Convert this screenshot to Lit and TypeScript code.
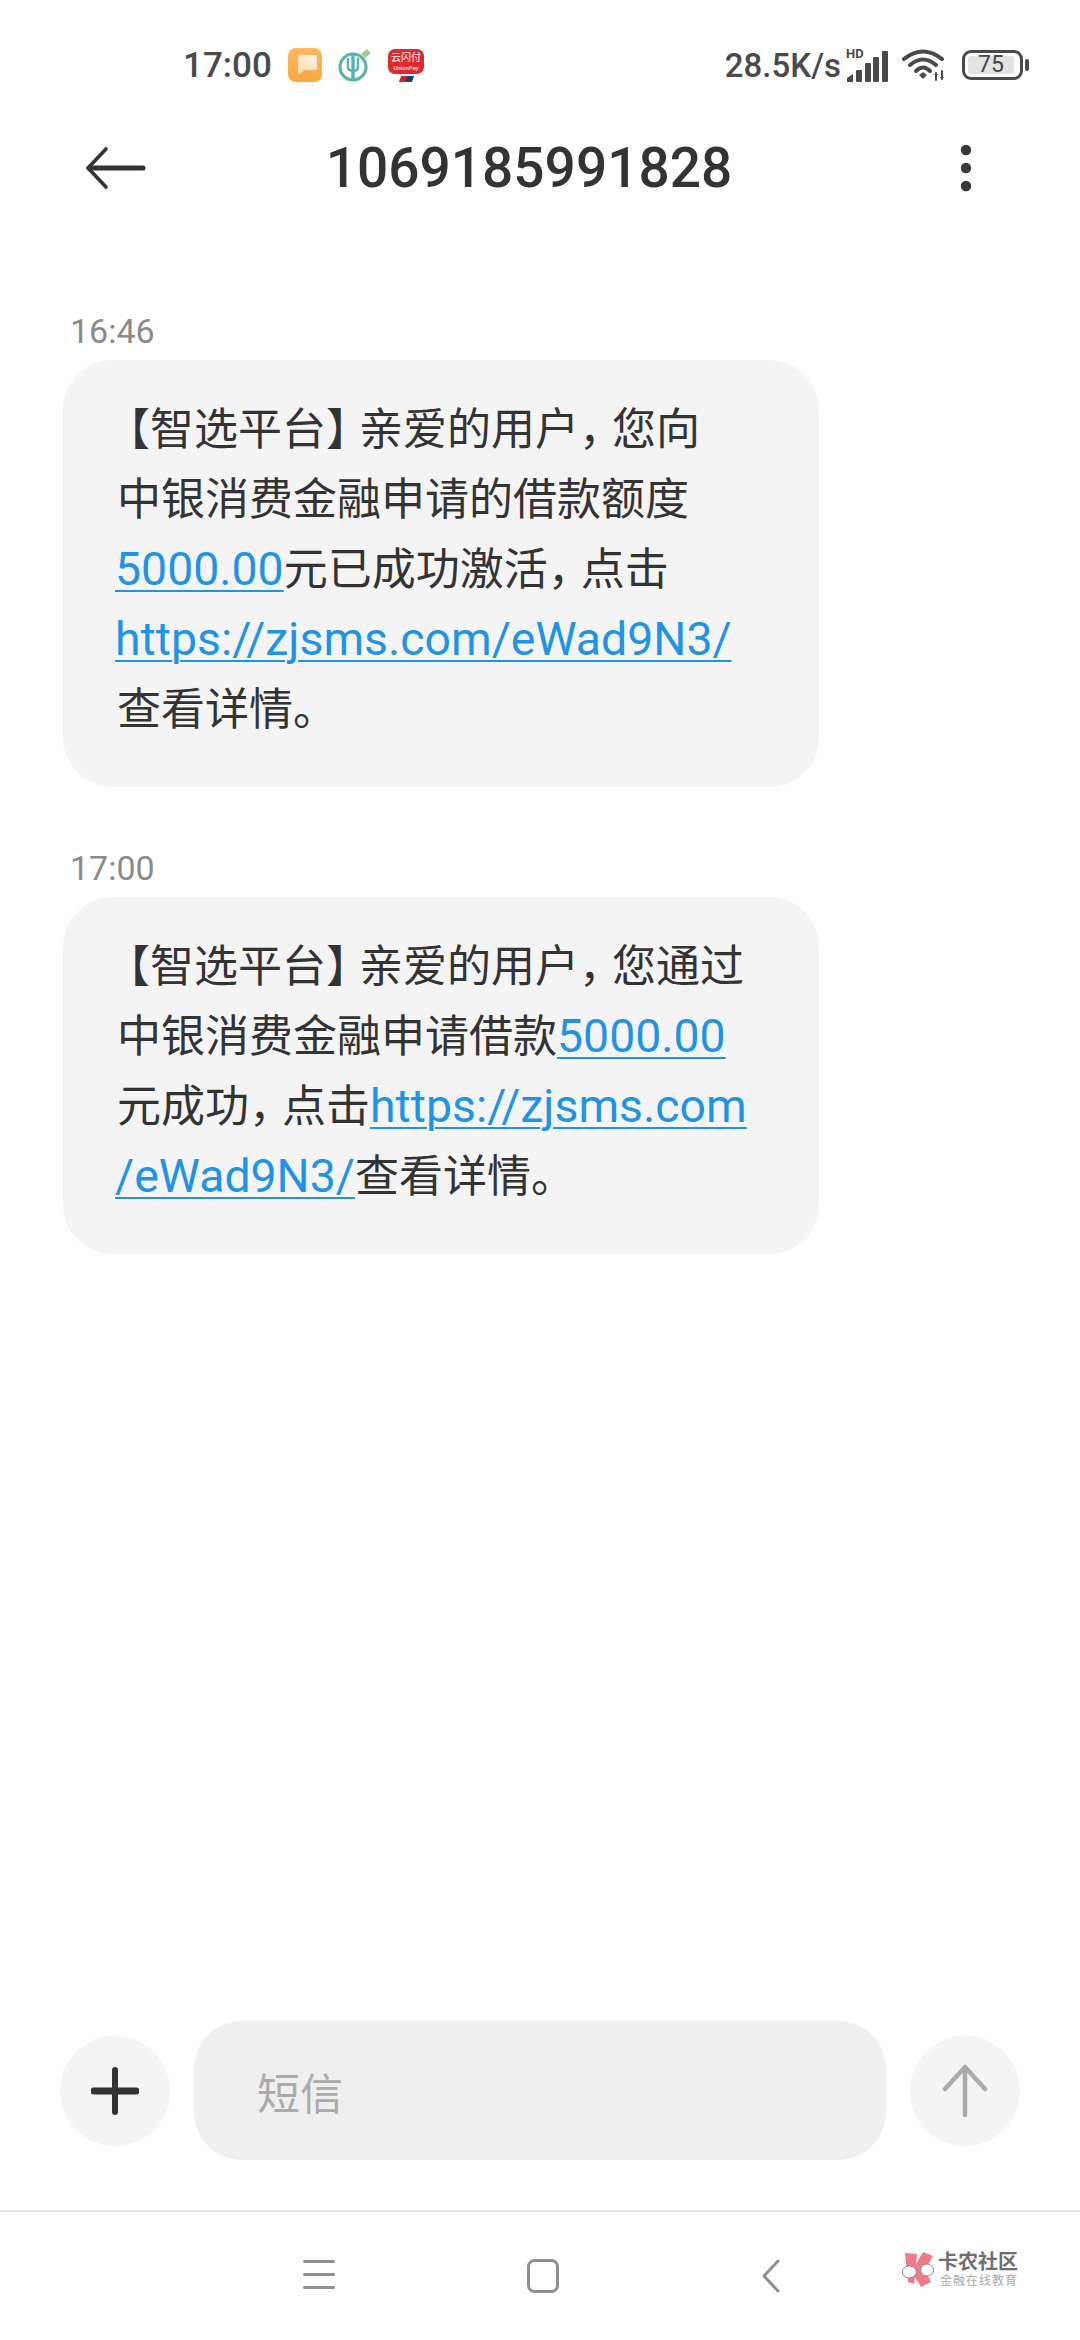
import { LitElement, html, css, svg } from 'lit';
import { customElement } from 'lit/decorators.js';

const backIcon = html`<svg width="62" height="44" viewBox="0 0 62 44" fill="none" stroke="#333" stroke-linecap="round" stroke-linejoin="round">
  <path d="M21 3 L3 22 L21 41" stroke-width="3.6"/><path d="M4 22 H58" stroke-width="5"/>
</svg>`;

const moreIcon = html`<svg width="14" height="48" viewBox="0 0 14 48" fill="#383838">
  <circle cx="7" cy="6" r="5.2"/><circle cx="7" cy="24" r="5.2"/><circle cx="7" cy="42" r="5.2"/>
</svg>`;

const msgIcon = svg`<svg width="34" height="34" viewBox="0 0 34 34">
  <defs>
    <linearGradient id="o" x1="0" y1="0" x2="0" y2="1"><stop offset="0" stop-color="#fdb95c"/><stop offset="1" stop-color="#fba63f"/></linearGradient>
    <linearGradient id="w" x1="1" y1="0" x2="0" y2="1"><stop offset="0" stop-color="#fff4e4"/><stop offset="1" stop-color="#fdd9a6"/></linearGradient>
  </defs>
  <rect width="34" height="34" rx="8" fill="url(#o)"/>
  <path d="M10 7 H29 V22 H16 L10 27 Z" fill="url(#w)"/>
</svg>`;

const bankIcon = svg`<svg width="34" height="34" viewBox="0 0 34 34" fill="none">
  <circle cx="15" cy="19" r="13" stroke="#58b3a8" stroke-width="3.2"/>
  <path d="M15 6 V32" stroke="#58b3a8" stroke-width="3.4"/>
  <path d="M10 10 V19 Q10 23 15 23 Q20 23 20 19 V10" stroke="#58b3a8" stroke-width="2.4"/>
  <path d="M23 6 L29 1 L33 5 L27 10 Z" fill="#9ccf85"/>
</svg>`;

const signalIcon = html`<svg width="42" height="32" viewBox="0 0 42 32" fill="#4a4a4a">
  <path d="M1 32 V28 L7 24 V32 Z"/>
  <rect x="10" y="20" width="6" height="12" rx="1"/>
  <rect x="19" y="13" width="6" height="19" rx="1"/>
  <rect x="27" y="7" width="6" height="25" rx="1"/>
  <rect x="36" y="1" width="6" height="31" rx="1"/>
</svg>`;

const wifiIcon = html`<svg width="46" height="32" viewBox="0 0 46 32" fill="none" stroke="#4a4a4a" stroke-linecap="round">
  <path d="M2 10 Q21 -5 40 10" stroke-width="4"/>
  <path d="M8 16 Q21 5 34 16" stroke-width="4"/>
  <path d="M14 22 Q21 15 28 22" stroke-width="4"/>
  <path d="M17 26 L21 23 L25 26 L21 30 Z" fill="#4a4a4a" stroke="none"/>
  <path d="M34 24 V31 M40 22 V30" stroke-width="2"/>
  <path d="M32 26 L34 23 L36 26 Z M38 28 L40 31 L42 28 Z" fill="#4a4a4a" stroke="none"/>
</svg>`;

const plusIcon = html`<svg width="48" height="48" viewBox="0 0 48 48" stroke="#333" stroke-linecap="round">
  <path d="M24 3 V45" stroke-width="6"/><path d="M3 24 H45" stroke-width="7"/>
</svg>`;

const sendIcon = html`<svg width="46" height="54" viewBox="0 0 46 54" fill="none" stroke="#ababab" stroke-linecap="round" stroke-linejoin="round">
  <path d="M23 3 V51" stroke-width="4.5"/><path d="M3 25 L23 3 L43 25" stroke-width="4.5"/>
</svg>`;

const menuIcon = html`<svg width="32" height="32" viewBox="0 0 32 32" fill="#8f8f8f">
  <rect y="1" width="32" height="3" rx="1.5"/><rect y="14" width="32" height="3" rx="1.5"/><rect y="27" width="32" height="3" rx="1.5"/>
</svg>`;

const homeIcon = html`<svg width="32" height="34" viewBox="0 0 32 34" fill="none" stroke="#8f8f8f" stroke-width="3">
  <rect x="1.5" y="1.5" width="29" height="31" rx="6"/>
</svg>`;

const navBackIcon = html`<svg width="20" height="34" viewBox="0 0 20 34" fill="none" stroke="#8f8f8f" stroke-width="3" stroke-linecap="round" stroke-linejoin="round">
  <path d="M17 2 L3 17 L17 32"/>
</svg>`;

const kanongLogo = html`<svg width="38" height="38" viewBox="0 0 38 38">
  <path d="M5 2 L17 3 L16 13 L23 1 L33 5 L25 19 L31 31 L21 36 L15 26 L14 33 L8 31 Z" fill="#ee7c88"/>
  <ellipse cx="9.3" cy="21" rx="7" ry="6" fill="#fff" stroke="#8a8a8a" stroke-width="1"/>
  <ellipse cx="27" cy="19" rx="6.5" ry="6" fill="#fff" stroke="#8a8a8a" stroke-width="1"/>
</svg>`;

@customElement('app-root')
export class AppRoot extends LitElement {
  static styles = css`
    :host {
      display: block;
      width: 1080px;
      height: 2340px;
      background: #fefefe;
      font-family: Roboto, 'Noto Sans CJK SC', sans-serif;
      color: #333;
    }
    .page {
      position: relative;
      height: 2340px;
      display: flex;
      flex-direction: column;
    }
    .status {
      height: 90px;
      flex: none;
      display: flex;
      align-items: center;
      padding: 40px 51px 0 183px;
      box-sizing: border-box;
      color: #4a4a4a;
    }
    .clock {
      font-size: 35px;
      font-weight: 500;
      width: 105px;
    }
    .notifs {
      display: flex;
      align-items: center;
      gap: 16px;
    }
    .unionpay {
      width: 36px;
      display: flex;
      flex-direction: column;
      align-items: center;
    }
    .unionpay-box {
      width: 36px;
      height: 25px;
      border-radius: 7px;
      background: #e0282e;
      color: #fff;
      display: flex;
      flex-direction: column;
      align-items: center;
      justify-content: center;
      white-space: nowrap;
    }
    .unionpay-name {
      font-size: 10px;
      line-height: 12px;
    }
    .unionpay-en {
      font-size: 6px;
      line-height: 7px;
    }
    .unionpay-flag {
      width: 13px;
      height: 6px;
      margin-top: 2px;
      background: linear-gradient(90deg, #c8242c 0 50%, #1c3f7a 50% 100%);
      transform: skewX(-20deg);
    }
    .status-right {
      margin-left: auto;
      display: flex;
      align-items: center;
    }
    .speed {
      font-size: 33px;
      font-weight: 500;
    }
    .signal {
      position: relative;
      display: flex;
      margin-left: 5px;
      margin-top: 2px;
    }
    .hd {
      position: absolute;
      left: 0;
      top: -3px;
      font-size: 13px;
      line-height: 14px;
      font-weight: 700;
    }
    .wifi {
      display: flex;
      margin-left: 14px;
    }
    .battery {
      display: flex;
      align-items: center;
      margin-left: 14px;
    }
    .battery-body {
      width: 61px;
      height: 30px;
      box-sizing: border-box;
      border: 3px solid #4a4a4a;
      border-radius: 9px;
      padding: 3px;
      display: flex;
    }
    .battery-level {
      width: 46px;
      background: #e3e3e3;
      border-radius: 3px;
      font-size: 23px;
      line-height: 18px;
      text-align: center;
      color: #444;
    }
    .battery-nub {
      width: 4px;
      height: 12px;
      margin-left: 2px;
      border-radius: 2px;
      background: #4a4a4a;
    }
    .header {
      height: 156px;
      flex: none;
      display: grid;
      grid-template-columns: 1fr auto 1fr;
      align-items: center;
      padding: 0 107px 0 85px;
      box-sizing: border-box;
    }
    .back {
      display: flex;
    }
    .title {
      font-size: 55px;
      font-weight: 500;
      color: #333;
    }
    .more {
      display: flex;
      justify-content: flex-end;
    }
    .thread {
      flex: 1;
      padding: 65px 0 0 63px;
    }
    .time {
      font-size: 34px;
      line-height: 40px;
      color: #8a8a8a;
      padding-left: 7px;
      margin-bottom: 9px;
    }
    .bubble {
      width: 756px;
      box-sizing: border-box;
      padding: 35px 54px 42px;
      margin-bottom: 61px;
      background: #f4f4f4;
      border-radius: 50px;
      font-size: 44px;
      line-height: 70px;
      color: #333;
      white-space: nowrap;
    }
    .bubble a {
      font-size: 46.4px;
      line-height: 1;
      color: #1f93e6;
      text-decoration: underline;
      text-decoration-thickness: 2px;
      text-underline-offset: 5px;
    }
    .bubble a.flush {
      margin-left: -2px;
    }
    /* the phone font sets this punctuation tighter than a full em */
    .open {
      margin-left: -11px;
    }
    .tight {
      letter-spacing: -11px;
    }
    .composer {
      flex: none;
      display: flex;
      align-items: center;
      gap: 24px;
      padding: 0 60px 50px 60px;
    }
    .round {
      width: 110px;
      height: 110px;
      flex: none;
      border-radius: 50%;
      background: #f4f4f4;
      display: flex;
      align-items: center;
      justify-content: center;
    }
    .input {
      flex: 1;
      height: 139px;
      border-radius: 48px;
      background: #efefef;
      display: flex;
      align-items: center;
      padding-left: 63px;
      font-size: 43px;
      color: #ababab;
    }
    .nav {
      flex: none;
      height: 130px;
      box-sizing: border-box;
      border-top: 2px solid #e8e8e8;
      display: flex;
      align-items: flex-start;
      padding: 47px 0 0 303px;
    }
    .nav-item {
      display: flex;
    }
    .nav-home {
      margin-left: 192px;
    }
    .nav-back {
      margin-left: 202px;
    }
    .watermark {
      position: absolute;
      left: 900px;
      top: 2251px;
      display: flex;
      align-items: center;
    }
    .wm-name {
      font-size: 20px;
      line-height: 23px;
      font-weight: 700;
      color: #6f6f6f;
    }
    .wm-sub {
      font-size: 12px;
      line-height: 15px;
      letter-spacing: 1px;
      padding-left: 2px;
      color: #aaa;
    }
  `;

  render() {
    return html`
      <div class="page">
        <div class="status">
          <span class="clock">17:00</span>
          <div class="notifs">
            ${msgIcon}
            ${bankIcon}
            <div class="unionpay">
              <div class="unionpay-box">
                <span class="unionpay-name">云闪付</span>
                <span class="unionpay-en">UnionPay</span>
              </div>
              <div class="unionpay-flag"></div>
            </div>
          </div>
          <div class="status-right">
            <span class="speed">28.5K/s</span>
            <div class="signal"><span class="hd">HD</span>${signalIcon}</div>
            <div class="wifi">${wifiIcon}</div>
            <div class="battery">
              <div class="battery-body"><div class="battery-level">75</div></div>
              <div class="battery-nub"></div>
            </div>
          </div>
        </div>

        <div class="header">
          <div class="back">${backIcon}</div>
          <div class="title">1069185991828</div>
          <div class="more">${moreIcon}</div>
        </div>

        <div class="thread">
          <div class="time">16:46</div>
          <div class="bubble">
            <span class="open">【</span>智选平台<span class="tight">】</span>亲爱的用户<span class="tight">，</span>您向<br />
            中银消费金融申请的借款额度<br />
            <a class="flush">5000.00</a>元已成功激活<span class="tight">，</span>点击<br />
            <a class="flush">https://zjsms.com/eWad9N3/</a><br />
            查看详情。
          </div>
          <div class="time">17:00</div>
          <div class="bubble">
            <span class="open">【</span>智选平台<span class="tight">】</span>亲爱的用户<span class="tight">，</span>您通过<br />
            中银消费金融申请借款<a>5000.00</a><br />
            元成功<span class="tight">，</span>点击<a>https://zjsms.com</a><br />
            <a class="flush">/eWad9N3/</a>查看详情。
          </div>
        </div>

        <div class="composer">
          <div class="round">${plusIcon}</div>
          <div class="input">短信</div>
          <div class="round">${sendIcon}</div>
        </div>

        <div class="nav">
          <div class="nav-item">${menuIcon}</div>
          <div class="nav-item nav-home">${homeIcon}</div>
          <div class="nav-item nav-back">${navBackIcon}</div>
        </div>

        <div class="watermark">
          ${kanongLogo}
          <div>
            <div class="wm-name">卡农社区</div>
            <div class="wm-sub">金融在线教育</div>
          </div>
        </div>
      </div>
    `;
  }
}

declare global {
  interface HTMLElementTagNameMap {
    'app-root': AppRoot
  }
}
